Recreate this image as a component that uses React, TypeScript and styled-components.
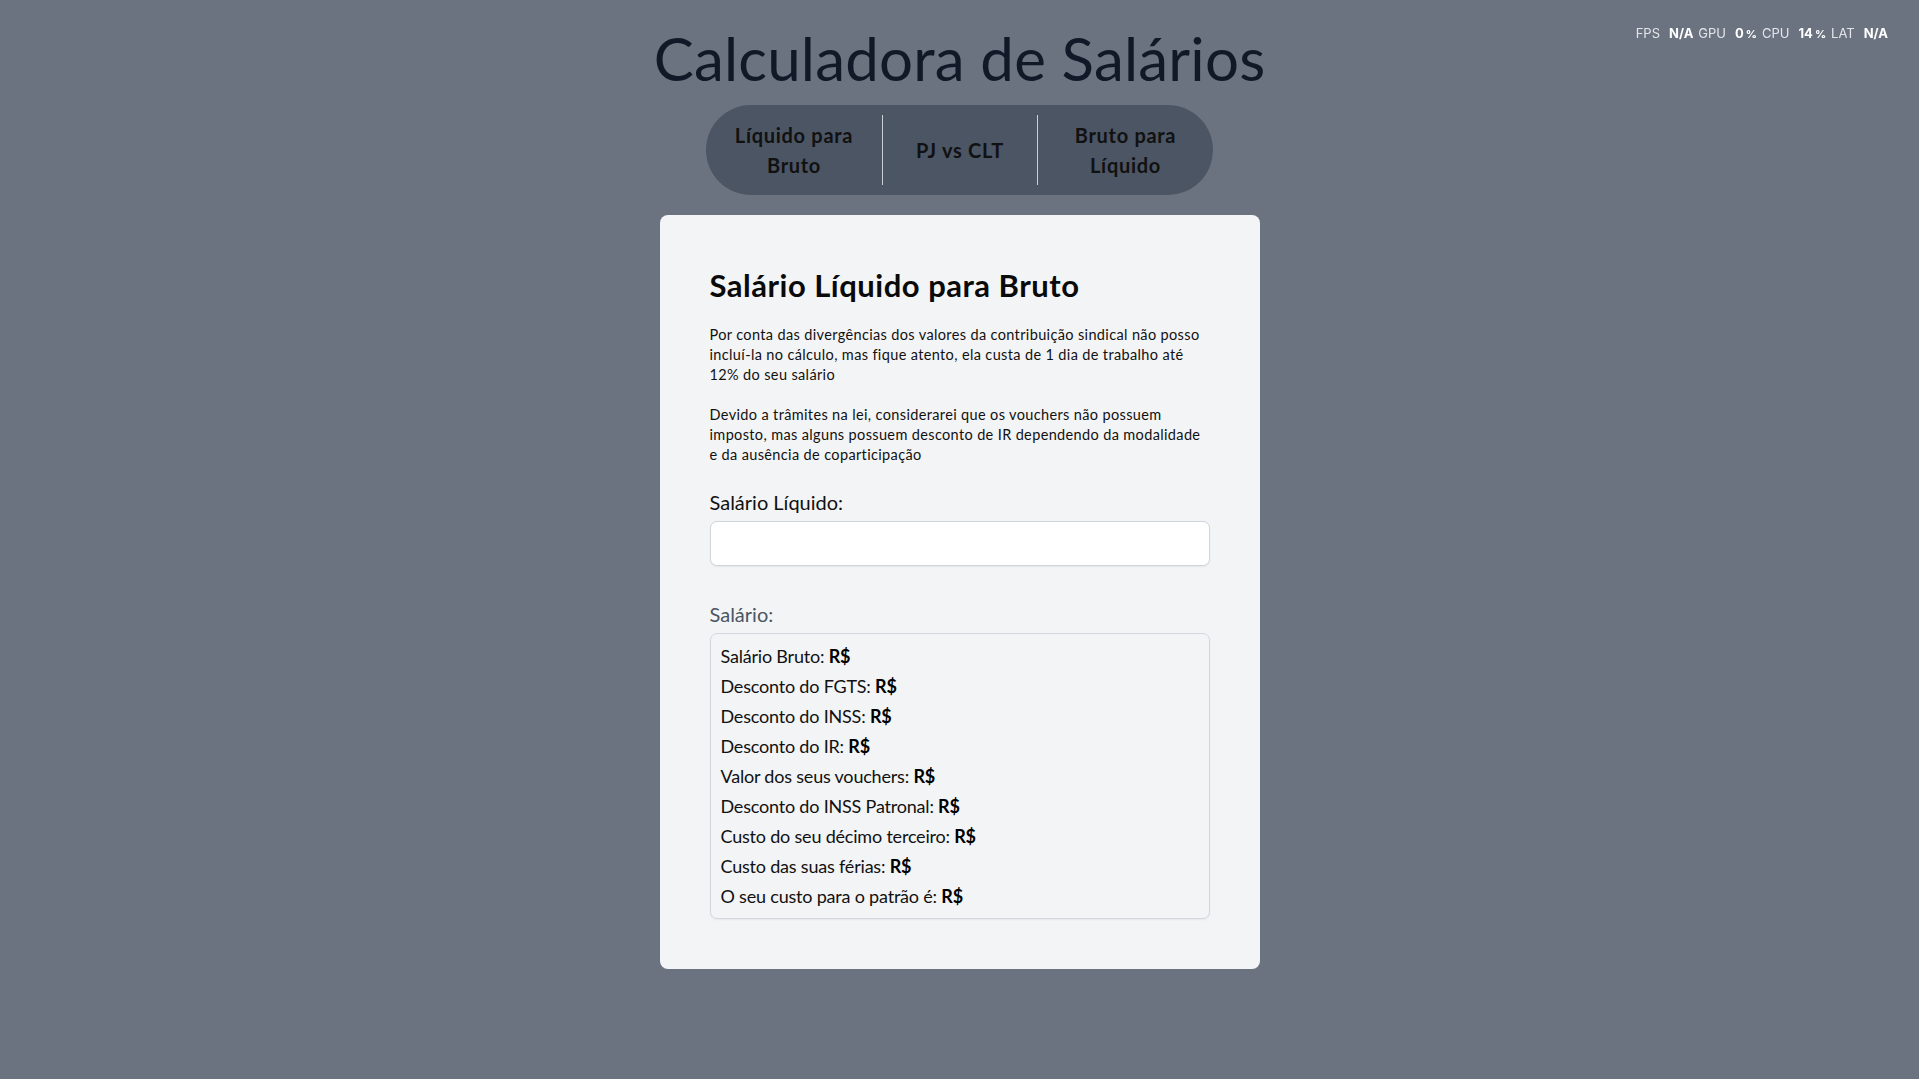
import React from "react";
import styled, { createGlobalStyle } from "styled-components";

const GlobalStyle = createGlobalStyle`
  html, body {
    margin: 0;
    padding: 0;
    background: #6b7280;
    font-family: Lato, "Open Sans", "Noto Sans", sans-serif;
  }
  * { box-sizing: border-box; }
`;

const Page = styled.main`
  min-height: 1079px;
  display: flex;
  flex-direction: column;
  align-items: center;
  padding-top: 28px;
`;

const Title = styled.h1`
  margin: 0;
  font-size: 60px;
  line-height: 60px;
  font-weight: 400;
  letter-spacing: 0.2px;
  color: #111827;
`;

const TabBar = styled.nav`
  margin-top: 17px;
  display: flex;
  align-items: center;
  height: 90px;
  padding: 10px 0;
  background: #4b5563;
  border-radius: 45px;
`;

const Tab = styled.button<{ $w: number; $divider?: boolean }>`
  width: ${(p) => p.$w}px;
  height: 70px;
  padding: 0 20px;
  display: flex;
  align-items: center;
  justify-content: center;
  background: transparent;
  border: none;
  border-left: ${(p) => (p.$divider ? "1px solid #cbd0d6" : "none")};
  font-family: inherit;
  font-size: 20px;
  line-height: 30px;
  font-weight: 700;
  letter-spacing: 0.7px;
  color: #111111;
  text-align: center;
  cursor: pointer;
`;

const Card = styled.section`
  margin-top: 20px;
  width: 600px;
  padding: 50px;
  background: #f3f4f6;
  border-radius: 8px;
`;

const CardTitle = styled.h2`
  margin: 0;
  font-size: 31px;
  line-height: 40px;
  font-weight: 700;
  letter-spacing: 0.5px;
  color: #0a0a0a;
`;

const Paragraph = styled.p`
  margin: 20px 0 0;
  font-size: 14.5px;
  line-height: 20px;
  letter-spacing: 0.36px;
  color: #111111;
`;

const Field = styled.div<{ $gap: number }>`
  margin-top: ${(p) => p.$gap}px;
  display: flex;
  flex-direction: column;
  gap: 5px;
`;

const Label = styled.label<{ $muted?: boolean }>`
  font-size: 20px;
  line-height: 28px;
  color: ${(p) => (p.$muted ? "#4b5563" : "#111111")};
`;

const Input = styled.input`
  width: 100%;
  height: 45px;
  padding: 0 12px;
  border: 1px solid #d1d5db;
  border-radius: 7px;
  background: #ffffff;
  box-shadow: 0 1px 2px rgba(0, 0, 0, 0.06);
  font-family: inherit;
  font-size: 18px;
  outline: none;
`;

const ResultBox = styled.div`
  width: 100%;
  padding: 7px 10px;
  border: 1px solid #d4d7dd;
  border-radius: 7px;
  background: #f3f4f6;
  box-shadow: 0 1px 2px rgba(0, 0, 0, 0.05);
`;

const ResultLine = styled.div`
  font-size: 18px;
  line-height: 30px;
  letter-spacing: -0.2px;
  color: #111111;

  b {
    font-weight: 700;
    color: #000;
  }
`;

const Stats = styled.div`
  position: fixed;
  top: 24px;
  right: 31px;
  display: flex;
  align-items: baseline;
  font-family: Inter, Roboto, sans-serif;
  font-size: 13px;
  line-height: 18px;
  color: rgba(255, 255, 255, 0.82);
`;

const StatLabel = styled.span`
  margin-right: 9px;
  &:not(:first-child) {
    margin-left: 5px;
  }
`;

const StatValue = styled.span`
  font-weight: 700;
  color: #ffffff;
`;

const Pct = styled.span`
  font-size: 11px;
  margin-left: 2px;
`;

const results = [
  "Salário Bruto:",
  "Desconto do FGTS:",
  "Desconto do INSS:",
  "Desconto do IR:",
  "Valor dos seus vouchers:",
  "Desconto do INSS Patronal:",
  "Custo do seu décimo terceiro:",
  "Custo das suas férias:",
  "O seu custo para o patrão é:",
];

export default function App() {
  return (
    <>
      <GlobalStyle />
      <Stats>
        <StatLabel>FPS</StatLabel>
        <StatValue>N/A</StatValue>
        <StatLabel>GPU</StatLabel>
        <StatValue>
          0<Pct>%</Pct>
        </StatValue>
        <StatLabel>CPU</StatLabel>
        <StatValue>
          14<Pct>%</Pct>
        </StatValue>
        <StatLabel>LAT</StatLabel>
        <StatValue>N/A</StatValue>
      </Stats>
      <Page>
        <Title>Calculadora de Salários</Title>
        <TabBar>
          <Tab $w={176}>Líquido para Bruto</Tab>
          <Tab $w={155} $divider>
            PJ vs CLT
          </Tab>
          <Tab $w={176} $divider>
            Bruto para Líquido
          </Tab>
        </TabBar>
        <Card>
          <CardTitle>Salário Líquido para Bruto</CardTitle>
          <Paragraph>
            Por conta das divergências dos valores da contribuição sindical não posso
            <br />
            incluí-la no cálculo, mas fique atento, ela custa de 1 dia de trabalho até
            <br />
            12% do seu salário
          </Paragraph>
          <Paragraph>
            Devido a trâmites na lei, considerarei que os vouchers não possuem
            <br />
            imposto, mas alguns possuem desconto de IR dependendo da modalidade
            <br />e da ausência de coparticipação
          </Paragraph>
          <Field $gap={23}>
            <Label htmlFor="liquido">Salário Líquido:</Label>
            <Input id="liquido" type="text" />
          </Field>
          <Field $gap={34}>
            <Label $muted>Salário:</Label>
            <ResultBox>
              {results.map((r) => (
                <ResultLine key={r}>
                  {r} <b>R$</b>
                </ResultLine>
              ))}
            </ResultBox>
          </Field>
        </Card>
      </Page>
    </>
  );
}
